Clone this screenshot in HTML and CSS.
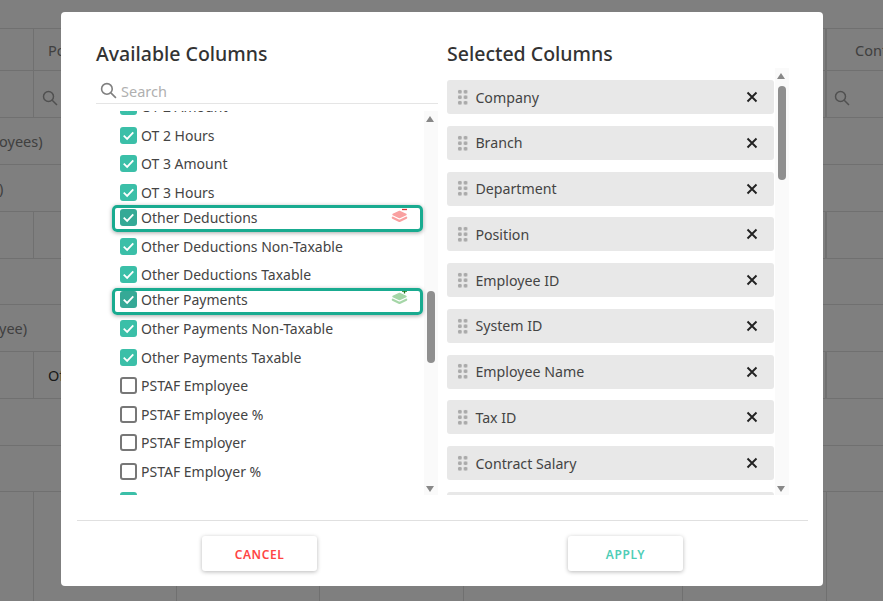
FILE: index.html
```html
<!DOCTYPE html>
<html lang="en">
<head>
<meta charset="utf-8">
<title>Columns</title>
<link rel="stylesheet" href="styles.css">
</head>
<body>
<div class="table">
  <div class="row r28"></div>
  <div class="row r42"><div class="c c33"></div><div class="c grow"><span class="t tx14">Po</span></div><div class="c c57"><span class="t tx28">Cont</span></div></div>
  <div class="row r47"><div class="c c33"></div><div class="c grow"><svg class="si si-l" viewBox="0 0 16 16"><circle cx="6.5" cy="6.5" r="5"/><path d="M10.2 10.2 15 15"/></svg></div><div class="c c57"><svg class="si si-r" viewBox="0 0 16 16"><circle cx="6.5" cy="6.5" r="5"/><path d="M10.2 10.2 15 15"/></svg></div></div>
  <div class="row r47"><div class="c grow end"><span class="t lead">oyees)</span></div></div>
  <div class="row r47"><div class="c grow end"><span class="t lead">)</span></div></div>
  <div class="row r47"><div class="c c33"></div><div class="c grow"></div><div class="c c57"></div></div>
  <div class="row r46"><div class="c grow end"></div></div>
  <div class="row r47"><div class="c grow end"><span class="t lead">yee)</span></div></div>
  <div class="row r47"><div class="c c33"></div><div class="c grow"><span class="t tx14 dark">Of</span></div><div class="c c57"></div></div>
  <div class="row r47"><div class="c grow end"></div></div>
  <div class="row r46"><div class="c grow end"></div></div>
  <div class="row rlast"><div class="c c33"></div><div class="c c143"></div><div class="c c143"></div><div class="c c144"></div><div class="c c219"></div><div class="c c144"></div><div class="c grow end"></div></div>
</div>
<div class="overlay"></div>
<div class="modal">
  <div class="cols">
    <section class="left">
      <h2>Available Columns</h2>
      <div class="search">
        <svg class="search-ic" viewBox="0 0 16 16"><circle cx="6.5" cy="6.5" r="5"/><path d="M10.2 10.2 15 15"/></svg>
        <span>Search</span>
      </div>
      <div class="scrollwrap avail">
        <div class="list">
          <div class="item"><i class="cb on"><svg viewBox="0 0 16 16"><path d="M3.5 8.2 6.7 11.2 12.5 5"/></svg></i><span>OT 2 Amount</span></div>
          <div class="item"><i class="cb on"><svg viewBox="0 0 16 16"><path d="M3.5 8.2 6.7 11.2 12.5 5"/></svg></i><span>OT 2 Hours</span></div>
          <div class="item"><i class="cb on"><svg viewBox="0 0 16 16"><path d="M3.5 8.2 6.7 11.2 12.5 5"/></svg></i><span>OT 3 Amount</span></div>
          <div class="item"><i class="cb on"><svg viewBox="0 0 16 16"><path d="M3.5 8.2 6.7 11.2 12.5 5"/></svg></i><span>OT 3 Hours</span></div>
          <div class="item hl"><i class="cb on"><svg viewBox="0 0 16 16"><path d="M3.5 8.2 6.7 11.2 12.5 5"/></svg></i><span>Other Deductions</span>
            <svg class="layers red" viewBox="0 0 20 16"><path class="l1" d="M3 5.5 9.5 2.5 16 5.5 9.5 8.5Z"/><path class="l2" d="M2.8 8.7 9.5 12 16.2 8.7"/><path class="mark" d="M12 .5H17"/></svg></div>
          <div class="item"><i class="cb on"><svg viewBox="0 0 16 16"><path d="M3.5 8.2 6.7 11.2 12.5 5"/></svg></i><span>Other Deductions Non-Taxable</span></div>
          <div class="item"><i class="cb on"><svg viewBox="0 0 16 16"><path d="M3.5 8.2 6.7 11.2 12.5 5"/></svg></i><span>Other Deductions Taxable</span></div>
          <div class="item hl"><i class="cb on"><svg viewBox="0 0 16 16"><path d="M3.5 8.2 6.7 11.2 12.5 5"/></svg></i><span>Other Payments</span>
            <svg class="layers green" viewBox="0 0 20 16"><path class="l1" d="M3 5.5 9.5 2.5 16 5.5 9.5 8.5Z"/><path class="l2" d="M2.8 8.7 9.5 12 16.2 8.7"/><path class="mark" d="M12 0H17M14.5 -2.5V2.5"/></svg></div>
          <div class="item"><i class="cb on"><svg viewBox="0 0 16 16"><path d="M3.5 8.2 6.7 11.2 12.5 5"/></svg></i><span>Other Payments Non-Taxable</span></div>
          <div class="item"><i class="cb on"><svg viewBox="0 0 16 16"><path d="M3.5 8.2 6.7 11.2 12.5 5"/></svg></i><span>Other Payments Taxable</span></div>
          <div class="item"><i class="cb"></i><span>PSTAF Employee</span></div>
          <div class="item"><i class="cb"></i><span>PSTAF Employee %</span></div>
          <div class="item"><i class="cb"></i><span>PSTAF Employer</span></div>
          <div class="item"><i class="cb"></i><span>PSTAF Employer %</span></div>
          <div class="item"><i class="cb on"><svg viewBox="0 0 16 16"><path d="M3.5 8.2 6.7 11.2 12.5 5"/></svg></i><span>PVF Employee</span></div>
        </div>
        <div class="bar bar-a"><b class="up"></b><b class="thumb"></b><b class="down"></b></div>
      </div>
    </section>
    <section class="right">
      <h2>Selected Columns</h2>
      <div class="scrollwrap sel">
        <div class="list2">
          <div class="pill"><i class="grip"></i><span>Company</span><svg class="x" viewBox="0 0 12 12"><path d="M1.5 1.5 10.5 10.5M10.5 1.5 1.5 10.5"/></svg></div>
          <div class="pill"><i class="grip"></i><span>Branch</span><svg class="x" viewBox="0 0 12 12"><path d="M1.5 1.5 10.5 10.5M10.5 1.5 1.5 10.5"/></svg></div>
          <div class="pill"><i class="grip"></i><span>Department</span><svg class="x" viewBox="0 0 12 12"><path d="M1.5 1.5 10.5 10.5M10.5 1.5 1.5 10.5"/></svg></div>
          <div class="pill"><i class="grip"></i><span>Position</span><svg class="x" viewBox="0 0 12 12"><path d="M1.5 1.5 10.5 10.5M10.5 1.5 1.5 10.5"/></svg></div>
          <div class="pill"><i class="grip"></i><span>Employee ID</span><svg class="x" viewBox="0 0 12 12"><path d="M1.5 1.5 10.5 10.5M10.5 1.5 1.5 10.5"/></svg></div>
          <div class="pill"><i class="grip"></i><span>System ID</span><svg class="x" viewBox="0 0 12 12"><path d="M1.5 1.5 10.5 10.5M10.5 1.5 1.5 10.5"/></svg></div>
          <div class="pill"><i class="grip"></i><span>Employee Name</span><svg class="x" viewBox="0 0 12 12"><path d="M1.5 1.5 10.5 10.5M10.5 1.5 1.5 10.5"/></svg></div>
          <div class="pill"><i class="grip"></i><span>Tax ID</span><svg class="x" viewBox="0 0 12 12"><path d="M1.5 1.5 10.5 10.5M10.5 1.5 1.5 10.5"/></svg></div>
          <div class="pill"><i class="grip"></i><span>Contract Salary</span><svg class="x" viewBox="0 0 12 12"><path d="M1.5 1.5 10.5 10.5M10.5 1.5 1.5 10.5"/></svg></div>
          <div class="pill"></div>
        </div>
        <div class="bar bar-b"><b class="up"></b><b class="thumb"></b><b class="down"></b></div>
      </div>
    </section>
  </div>
  <div class="foot">
    <button class="btn cancel">CANCEL</button>
    <button class="btn apply">APPLY</button>
  </div>
</div>
</body>
</html>
```
FILE: styles.css
```css
* { box-sizing: border-box; }
html, body { margin: 0; height: 100%; overflow: hidden; }
body { font-family: "Noto Sans", sans-serif; color: #444; background: #fff; position: relative; width: 883px; height: 601px; }

.table { display: flex; flex-direction: column; height: 601px; }
.row { display: flex; border-bottom: 1px solid #e0e0e0; }
.r28 { height: 29px; }
.r42 { height: 42px; }
.r47 { height: 47px; }
.r46 { height: 46px; }
.rlast { flex: 1; border-bottom: 0; }
.c { border-right: 1px solid #e0e0e0; display: flex; align-items: center; min-width: 0; overflow: hidden; font-size: 14.5px; color: #808080; }
.c33 { width: 34px; flex: none; }
.c57 { width: 57px; flex: none; border-right: 0; border-left: 1px solid #e0e0e0; }
.c143 { width: 143px; flex: none; }
.c144 { width: 144px; flex: none; }
.c219 { width: 219px; flex: none; }
.grow { flex: 1; }
.end { border-right: 0; }
.t { white-space: nowrap; }
.tx14 { margin-left: 14px; }
.tx28 { margin-left: 28px; }
.lead { margin-left: -1px; }
.dark { color: #333; }
.si { width: 16px; height: 16px; margin-top: 8px; fill: none; stroke: #a0a0a0; stroke-width: 1.5; }
.si-l { margin-left: 8px; }
.si-r { margin-left: 7px; }

.overlay { position: absolute; inset: 0; background: rgba(0,0,0,.5); }
.modal { position: absolute; left: 61px; top: 12px; width: 762px; height: 574px; background: #fff; border-radius: 4px; padding: 0 15px 0 16px; display: flex; flex-direction: column; }
.cols { display: flex; height: 509px; border-bottom: 1px solid #e0e0e0; }
h2 { margin: 0; font-size: 19.5px; font-weight: 500; line-height: 28px; color: #333; }
.left { width: 370px; padding: 28px 0 0 19px; flex: none; }
.right { flex: 1; padding: 28px 0 0 0; }

.search { height: 26px; margin-top: 10px; border-bottom: 1px solid #e5e5e5; display: flex; align-items: center; font-size: 14.5px; color: #b0b0b0; gap: 4px; padding-left: 4px; width: 342px; }
.search-ic { width: 17px; height: 17px; fill: none; stroke: #808080; stroke-width: 1.5; }

.scrollwrap { position: relative; overflow: hidden; }
.avail { height: 384px; margin-top: 7px; width: 342px; }
.list { padding-left: 23.5px; margin-top: -18.5px; }
.item { height: 28.6px; display: flex; align-items: center; gap: 4.5px; font-size: 14px; color: #444; position: relative; white-space: nowrap; }
.cb { width: 17px; height: 17px; border: 2px solid #777; border-radius: 3px; flex: none; display: block; background: #fff; }
.cb.on { background: #3bbfa8; border: 0; }
.cb svg { display: block; width: 17px; height: 17px; fill: none; stroke: #fff; stroke-width: 1.7; }
.hl { z-index: 1; margin-top: -3.5px; }
.hl .cb.on { background: #35a996; }
.hl::after { content: ""; box-sizing: border-box; position: absolute; left: -7.5px; width: 311px; top: 2px; height: 27px; border: 3px solid #19ab90; border-radius: 5px; box-shadow: 0 1px 4px rgba(0,0,0,.35); pointer-events: none; }
.layers { position: absolute; width: 20px; height: 16px; left: 270.5px; top: 5.3px; overflow: visible; }
.layers .mark { fill: none; stroke-width: 1.3; }
.layers .l1 { stroke-width: 1.4; stroke-linejoin: round; }
.layers .l2 { fill: none; stroke-width: 2.2; stroke-linejoin: round; stroke-linecap: round; }
.red .l1 { fill: #f9a0a0; stroke: #f9a0a0; }
.red .l2 { stroke: #f9a0a0; }
.red .mark { stroke: #d33; }
.green .l1 { fill: #a5d6a7; stroke: #a5d6a7; }
.green .l2 { stroke: #a5d6a7; }
.green .mark { stroke: #1a7a1a; }

.bar { position: absolute; right: 0; top: 0; width: 14px; height: 100%; background: #fafafa; }
.bar b { position: absolute; display: block; }
.up { left: 2px; top: 5px; width: 0; height: 0; border: 4.5px solid transparent; border-top: 0; border-bottom: 6px solid #888; }
.down { left: 2px; bottom: 3px; width: 0; height: 0; border: 4.5px solid transparent; border-bottom: 0; border-top: 6px solid #888; }
.thumb { left: 2.5px; width: 8px; background: #8f8f8f; border-radius: 4px; }
.bar-a .thumb { top: 180px; height: 72px; }

.sel { height: 427px; }
.list2 { display: flex; flex-direction: column; gap: 11.75px; padding-top: 12px; width: 327px; }
.pill { height: 34px; flex: none; background: #e8e8e8; border-radius: 3px; display: flex; align-items: center; padding: 0 16px 0 10px; font-size: 14.2px; color: #444; }
.pill span { flex: 1; margin-left: 7px; }
.grip { display: block; width: 11.4px; height: 16.5px; background-image: radial-gradient(circle, #aaa 1.8px, transparent 2.2px); background-size: 5.7px 5.5px; }
.x { width: 12px; height: 12px; fill: none; stroke: #222; stroke-width: 1.9; flex: none; }
.bar-b { right: auto; left: 328px; }
.bar-b .thumb { top: 18px; height: 94px; }

.foot { flex: 1; display: flex; padding-left: 125px; gap: 251px; padding-top: 15px; }
.btn { width: 115px; height: 35px; padding: 1px 0 0; border: 0; border-radius: 3px; background: #fff; box-shadow: 0 1px 4px rgba(0,0,0,.28); font-family: "Noto Sans", sans-serif; font-size: 12px; font-weight: 600; letter-spacing: .6px; }
.cancel { color: #f44; }
.apply { color: #4fcdb6; }
```
